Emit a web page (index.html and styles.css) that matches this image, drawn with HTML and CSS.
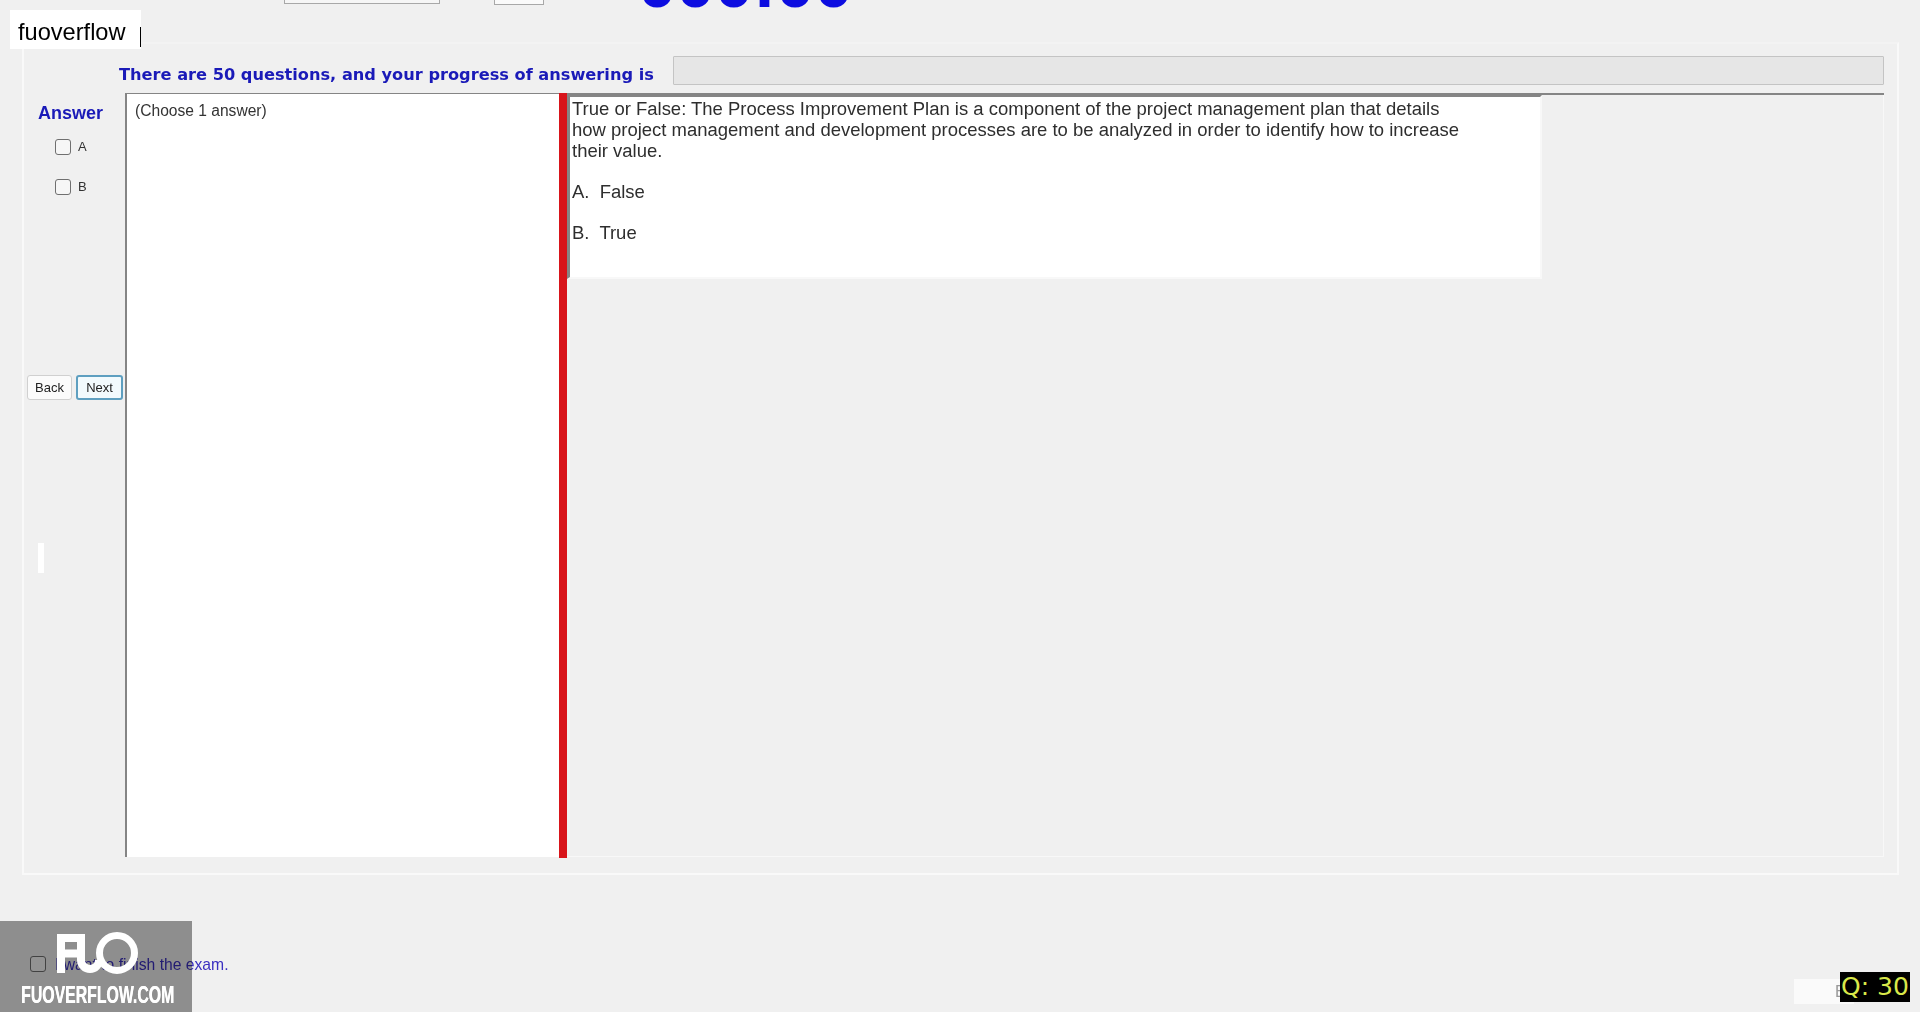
FILE: index.html
```html
<!DOCTYPE html>
<html lang="en">
<head>
  <meta charset="UTF-8">
  <meta name="viewport" content="width=device-width, initial-scale=1.0">
  <title>Exam</title>
  <link rel="stylesheet" href="styles.css">
</head>
<body>

  <div class="exam-window">
    <!-- Barre du haut, coupee par le haut de la capture -->
    <div class="top-strip">
      <div class="top-combo"></div>
      <div class="top-spin"></div>
      <div class="timer">000:00</div>
    </div>

    <div class="exam-frame">
      <div class="progress-row">
        <span class="progress-label">There are 50 questions, and your progress of answering is</span>
        <div class="progress-bar"></div>
      </div>

      <div class="exam-body">
        <div class="answer-col">
          <div class="answer-title">Answer</div>
          <label class="answer-option"><span class="checkbox"></span>A</label>
          <label class="answer-option"><span class="checkbox"></span>B</label>
          <div class="nav-buttons">
            <button class="nav-button">Back</button>
            <button class="nav-button nav-button-active">Next</button>
          </div>
          <div class="white-mark"></div>
        </div>

        <div class="content-panel">
          <div class="choose-panel">(Choose 1 answer)</div>
          <div class="red-bar"></div>
          <div class="question-area">
            <div class="question-box">
              <p class="question-text">True or False: The Process Improvement Plan is a component of the project management plan that details<br>how project management and development processes are to be analyzed in order to identify how to increase<br>their value.</p>
              <p class="question-choice">A.&nbsp; False</p>
              <p class="question-choice">B.&nbsp; True</p>
            </div>
          </div>
        </div>
      </div>
    </div>

    <div class="finish-row">
      <label class="finish-label"><span class="checkbox checkbox-dark"></span>I want to finish the exam.</label>
      <div class="finish-button">E</div>
    </div>
  </div>

  <!-- Elements poses par-dessus la video -->
  <div class="brand-tag">fuoverflow</div>
  <div class="brand-cursor"></div>
  <div class="watermark">
    <div class="watermark-shade"></div>
    <svg class="watermark-logo" width="86" height="44" viewBox="0 0 86 44">
      <path d="M6 41V6H26M6 21.5H26M26 2V28a9 9 0 0 0 18 0" fill="none" stroke="#fff" stroke-width="8"/>
      <circle cx="62" cy="21" r="17.5" fill="none" stroke="#fff" stroke-width="7"/>
    </svg>
    <div class="watermark-text">FUOVERFLOW.COM</div>
  </div>
  <div class="question-counter">Q: 30</div>

</body>
</html>
```

FILE: styles.css
```css
:root {
  --bg-color: #f0f0f0;
  --frame-line: #f9f9f9;
  --panel-line: #858585;
  --blue-text: #1a1ab8;
  --text-color: #2a2a2a;
  --red: #d8141a;
}

* {
  box-sizing: border-box;
}

html, body {
  height: 100%;
}

body {
  margin: 0;
  background-color: var(--bg-color);
  font-family: "Liberation Sans", Arial, sans-serif;
  color: var(--text-color);
  overflow: hidden;
}

.exam-window {
  display: flex;
  flex-direction: column;
  height: 100%;
  padding-left: 22px;
  padding-right: 21px;
}

.top-strip {
  height: 42px;
  overflow: hidden;
  position: relative;
  flex-shrink: 0;
}

.top-combo {
  position: absolute;
  left: 262px;
  top: -10px;
  width: 156px;
  height: 14px;
  background-color: #f6f6f6;
  border: 1px solid #a8a8a8;
}

.top-spin {
  position: absolute;
  left: 472px;
  top: -10px;
  width: 50px;
  height: 15px;
  background-color: #fafafa;
  border: 1px solid #a8a8a8;
}

.timer {
  position: absolute;
  left: 616px;
  top: -51px;
  font-size: 69px;
  line-height: 69px;
  font-weight: 700;
  color: #0d0de0;
}

.exam-frame {
  height: 833px;
  border: 2px solid var(--frame-line);
  border-top-color: #f3f3f3;
  padding: 11px 13px 17px 1px;
  display: flex;
  flex-direction: column;
  flex-shrink: 0;
}

.progress-row {
  display: flex;
  align-items: center;
  height: 30px;
  padding-left: 94px;
  gap: 16px;
  flex-shrink: 0;
}

.progress-label {
  font-family: "DejaVu Sans", sans-serif;
  font-size: 16.2px;
  font-weight: 700;
  color: var(--blue-text);
  white-space: nowrap;
  width: 538px;
  margin-top: 8px;
}

.progress-bar {
  flex: 1;
  height: 29px;
  background-color: #e6e6e6;
  border: 1px solid #c4c4c4;
  border-radius: 1px;
}

.exam-body {
  display: flex;
  flex: 1;
  margin-top: 8px;
}

.answer-col {
  width: 100px;
  flex-shrink: 0;
  display: flex;
  flex-direction: column;
  position: relative;
}

.answer-title {
  font-size: 18px;
  font-weight: 700;
  color: var(--blue-text);
  margin-top: 10px;
  margin-left: 13px;
  margin-bottom: 14px;
}

.answer-option {
  display: flex;
  align-items: center;
  height: 17px;
  margin-left: 30px;
  margin-bottom: 23px;
  font-size: 13px;
  color: #333;
}

.checkbox {
  display: inline-block;
  width: 16px;
  height: 16px;
  border: 1px solid #6f6f6f;
  border-radius: 3px;
  background-color: #f6f6f6;
  margin-right: 7px;
  flex-shrink: 0;
}

.nav-buttons {
  display: flex;
  gap: 4px;
  margin-top: 157px;
  margin-left: 2px;
}

.nav-button {
  width: 45px;
  height: 25px;
  padding: 0;
  font-family: "Liberation Sans", Arial, sans-serif;
  font-size: 13px;
  color: #222;
  background-color: #fbfbfb;
  border: 1px solid #d0d0d0;
  border-radius: 3px;
}

.nav-button-active {
  width: 47px;
  background-color: #f2fafd;
  border: 2px solid #5e9fc0;
}

.white-mark {
  width: 6px;
  height: 30px;
  background-color: #fff;
  margin-top: 143px;
  margin-left: 13px;
}

.content-panel {
  display: flex;
  flex: 1;
  border-top: 2px solid var(--panel-line);
  height: 764px;
}

.choose-panel {
  width: 434px;
  background-color: #fff;
  border-left: 2px solid var(--panel-line);
  padding: 7px 0 0 8px;
  font-size: 15.6px;
  color: #333;
  line-height: 20px;
  margin-top: -1px;
}

.red-bar {
  width: 8px;
  background-color: var(--red);
  margin-top: -2px;
  margin-bottom: -1px;
}

.question-area {
  flex: 1;
  border-right: 1px solid #f8f8f8;
  border-bottom: 1px solid #f8f8f8;
}

.question-box {
  width: 975px;
  height: 184px;
  background-color: #fff;
  border-left: 3px solid var(--panel-line);
  border-top: 2px solid var(--panel-line);
  border-right: 2px solid #f8f8f8;
  border-bottom: 2px solid #f8f8f8;
  padding: 1px 0 0 2px;
  font-size: 18.48px;
  line-height: 21px;
  color: #2e2e2e;
}

.question-text {
  margin: 0;
  white-space: nowrap;
}

.question-choice {
  margin: 20px 0 0;
}

.finish-row {
  display: flex;
  flex: 1;
  justify-content: space-between;
  align-items: flex-end;
}

.finish-label {
  display: flex;
  align-items: center;
  font-size: 15.7px;
  color: #3a2fc0;
  margin-left: 8px;
  margin-bottom: 38px;
}

.checkbox-dark {
  margin-right: 9px;
  margin-bottom: 2px;
}

.finish-button {
  width: 60px;
  height: 25px;
  margin-right: 45px;
  margin-bottom: 8px;
  padding-left: 41px;
  background-color: #fafafa;
  color: #999;
  font-size: 16px;
  line-height: 25px;
}

.brand-tag {
  position: absolute;
  left: 10px;
  top: 10px;
  width: 131px;
  height: 39px;
  background-color: #fff;
  color: #000;
  padding-left: 8px;
  font-size: 23.6px;
  line-height: 45px;
}

.brand-cursor {
  position: absolute;
  left: 140px;
  top: 27px;
  width: 1px;
  height: 20px;
  background-color: #000;
}

.watermark {
  position: absolute;
  left: 0;
  bottom: 0;
  width: 192px;
  height: 91px;
  color: #fff;
}

.watermark-shade {
  position: absolute;
  top: 0;
  right: 0;
  bottom: 0;
  left: 0;
  background-color: #979797;
  mix-blend-mode: multiply;
}

.watermark-logo {
  position: absolute;
  left: 55px;
  top: 11px;
}

.watermark-text {
  position: absolute;
  left: 21px;
  top: 62px;
  font-weight: 700;
  font-size: 24px;
  line-height: 24px;
  white-space: nowrap;
  transform: scaleX(0.66);
  transform-origin: left;
  text-shadow: 0.5px 0 0 #fff;
}

.question-counter {
  position: absolute;
  left: 1840px;
  top: 972px;
  width: 70px;
  height: 30px;
  background-color: #000;
  color: #d9e84a;
  font-family: "DejaVu Sans", sans-serif;
  font-size: 25px;
  line-height: 29px;
  white-space: pre;
  padding-left: 1px;
}
```
